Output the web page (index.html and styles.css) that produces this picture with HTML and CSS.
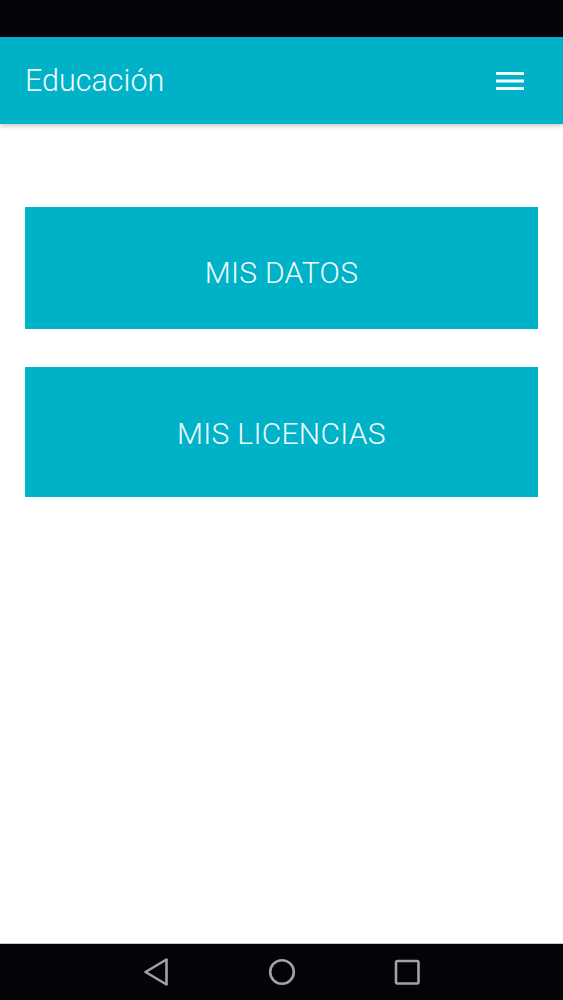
FILE: index.html
```html
<!DOCTYPE html>
<html lang="es">
<head>
<meta charset="utf-8">
<title>Educación</title>
<link rel="stylesheet" href="styles.css">
</head>
<body>
<div class="screen">
  <div class="status-bar"></div>
  <header class="app-bar">
    <h1 class="app-title">Educación</h1>
    <button class="menu-btn" aria-label="Menú">
      <svg width="28" height="18" viewBox="0 0 28 18"><rect x="0" y="0" width="28" height="3" fill="#f4fdfe"/><rect x="0" y="7.5" width="28" height="3" fill="#f4fdfe"/><rect x="0" y="15" width="28" height="3" fill="#f4fdfe"/></svg>
    </button>
  </header>
  <main class="content">
    <a class="tile tile-datos" href="#">MIS DATOS</a>
    <a class="tile tile-licencias" href="#">MIS LICENCIAS</a>
  </main>
  <nav class="nav-bar">
    <svg class="nav-icon" width="30" height="32" viewBox="0 0 30 32"><path d="M24.5 3.5 L24.5 28.5 L3.5 16 Z" fill="none" stroke="#a3a3a3" stroke-width="2.6" stroke-linejoin="round"/></svg>
    <svg class="nav-icon" width="30" height="32" viewBox="0 0 30 32"><circle cx="15" cy="16" r="11.8" fill="none" stroke="#a3a3a3" stroke-width="2.6"/></svg>
    <svg class="nav-icon" width="30" height="32" viewBox="0 0 30 32"><rect x="4" y="5" width="22.5" height="22.5" rx="1.5" fill="none" stroke="#a3a3a3" stroke-width="2.6"/></svg>
  </nav>
</div>
</body>
</html>
```

FILE: styles.css
```css
* { box-sizing: border-box; }
html, body { margin: 0; padding: 0; background: #ffffff; }
body { font-family: Roboto, "Noto Sans", sans-serif; }

.screen {
  width: 563px;
  height: 1000px;
  display: flex;
  flex-direction: column;
  overflow: hidden;
}

.status-bar {
  height: 37px;
  flex: none;
  background: #040307;
}

.app-bar {
  height: 87px;
  flex: none;
  background: #00b2c8;
  display: flex;
  align-items: center;
  justify-content: space-between;
  padding: 0 39px 0 25px;
  box-shadow: 0 2px 5px rgba(0, 0, 0, 0.22);
  position: relative;
  z-index: 1;
}

.app-title {
  margin: 0;
  font-size: 30.5px;
  font-weight: 300;
  color: #f0fcfd;
  letter-spacing: 0;
  line-height: 1;
  padding-top: 2px;
}

.menu-btn {
  background: none;
  border: 0;
  padding: 0;
  display: flex;
  margin-top: 1px;
}

.content {
  flex: 1;
  display: flex;
  flex-direction: column;
  gap: 38px;
  padding: 83px 25px 0 25px;
}

.tile {
  display: flex;
  align-items: center;
  justify-content: center;
  background: #00b2c8;
  color: #f0fcfd;
  text-decoration: none;
  font-size: 30px;
  font-weight: 300;
  letter-spacing: 0.3px;
  line-height: 1;
}

.tile-datos { height: 122px; padding-top: 9px; }
.tile-licencias { height: 130px; padding-top: 3px; }

.nav-bar {
  height: 57px;
  flex: none;
  background: #040307;
  border-top: 1px solid #c9c9c9;
  display: flex;
  align-items: center;
  justify-content: center;
  gap: 95px;
  padding-bottom: 1px;
}

.nav-icon { display: block; }
```
